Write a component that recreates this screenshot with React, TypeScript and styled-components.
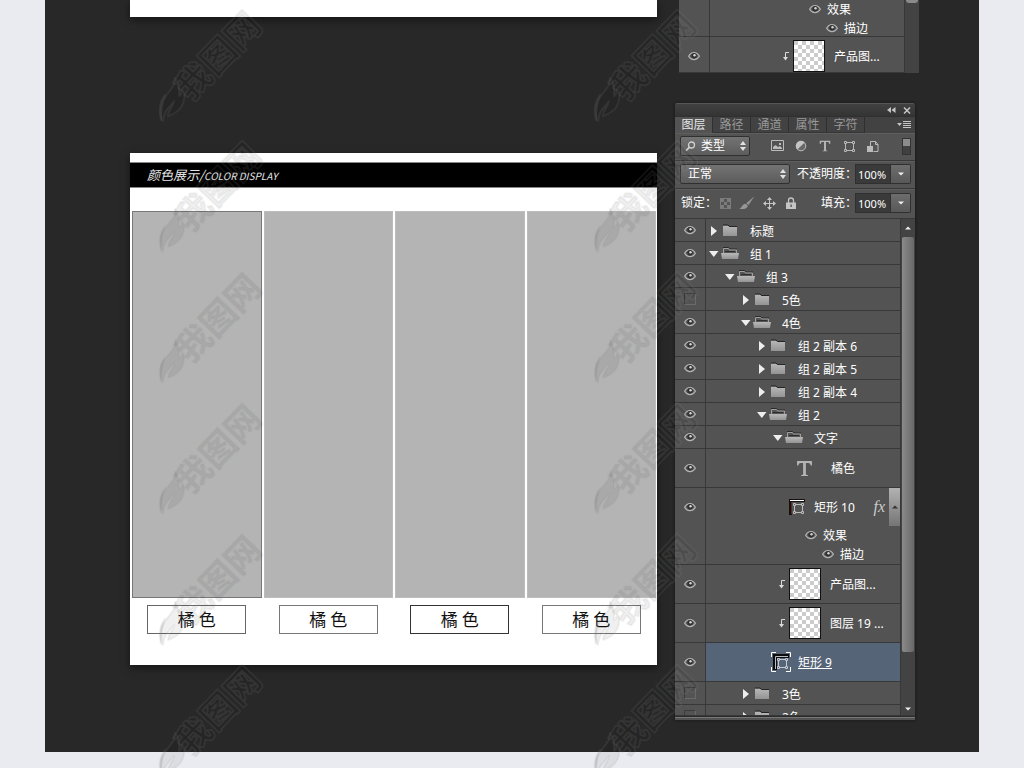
import React from "react";
import styled, { createGlobalStyle } from "styled-components";

const GlobalStyle = createGlobalStyle`
  *, *::before, *::after { box-sizing: border-box; }
  body {
    margin: 0;
    background: #e9ebf0;
    font-family: "Noto Sans", "Noto Sans CJK SC", sans-serif;
    font-size: 12px;
    line-height: 16px;
    color: #fff;
  }
  button, input, select { font: inherit; color: inherit; margin: 0; }
  svg { display: block; }
`;

const Page = styled.div`
  position: relative;
  overflow: hidden;
  padding: 0 45px 16px;
`;

const Stage = styled.main`
  display: grid;
  grid-template-columns: minmax(0, 1fr) 240px;
  gap: 18px;
  padding: 0 64px 32px 85px;
  background: #282828;
`;

/* ---------- artboards ---------- */

const Boards = styled.section`
  display: flex;
  flex-direction: column;
  gap: 136px;
`;

const Board = styled.article`
  background: #fff;
  box-shadow: 0 3px 8px rgba(0, 0, 0, 0.5);
`;

const PreviousBoard = styled(Board)`
  height: 17px;
`;

const ColorBoard = styled(Board)`
  height: 512px;
  padding-top: 9px;
`;

const BoardTitle = styled.h1`
  margin: 0 0 23px;
  height: 26px;
  padding-left: 17px;
  border: solid #888;
  border-width: 1px 0;
  background: #000;
  color: #e8e8e8;
  font-family: "Noto Sans CJK SC", sans-serif;
  font-size: 13px;
  font-style: italic;
  font-weight: 400;
  line-height: 24px;
  small { font-size: 10px; }
`;

const Swatches = styled.div`
  display: grid;
  grid-template-columns: repeat(4, 1fr);
  gap: 2px;
  padding: 0 1px 0 2px;
`;

const SwatchColumn = styled.figure`
  display: flex;
  flex-direction: column;
  align-items: center;
  gap: 7px;
  margin: 0;
`;

const Swatch = styled.div<{ $selected?: boolean }>`
  width: 100%;
  height: 387px;
  background: #b4b4b4;
  border: 1px solid ${(p) => (p.$selected ? "#777" : "#bcbcbc")};
`;

const SwatchLabel = styled.figcaption<{ $tone: string }>`
  width: 99px;
  height: 29px;
  border: 1px solid ${(p) => p.$tone};
  color: #111;
  font-family: "Noto Sans CJK SC", sans-serif;
  font-size: 17px;
  font-weight: 400;
  line-height: 26px;
  text-align: center;
`;

/* ---------- side panels ---------- */

const Side = styled.aside`
  display: flex;
  flex-direction: column;
  gap: 30px;
`;

const UpperPanel = styled.div`
  display: flex;
  height: 73px;
  margin: 0 -4px 0 4px;
  overflow: hidden;
  background: #535353;
`;

const UpperRows = styled.div`
  flex: 1;
  display: flex;
  flex-direction: column;
  justify-content: flex-end;
`;

const Panel = styled.section`
  overflow: hidden;
  border-radius: 3px 3px 0 0;
  background: #535353;
  box-shadow: 0 0 3px #151515;
`;

const PanelHeader = styled.header`
  display: flex;
  justify-content: flex-end;
  align-items: center;
  gap: 7px;
  height: 13px;
  padding: 0 4px;
  border-top: 1px solid #565656;
  background: linear-gradient(#414141, #343434);
`;

const IconButton = styled.button`
  display: flex;
  align-items: center;
  justify-content: center;
  padding: 0;
  border: 0;
  background: none;
  color: #c4c4c4;
`;

const Tabs = styled.nav`
  display: flex;
  height: 17px;
  background: #424242;
  border-top: 1px solid #303030;
`;

const Tab = styled.button<{ $active?: boolean }>`
  width: 38px;
  padding: 0;
  border: 0;
  border-right: 1px solid #303030;
  border-bottom: 1px solid ${(p) => (p.$active ? "#535353" : "#363636")};
  background: ${(p) => (p.$active ? "#535353" : "#424242")};
  color: ${(p) => (p.$active ? "#e6e6e6" : "#989898")};
  line-height: 15px;
`;

const TabMenu = styled(IconButton)`
  margin-left: auto;
  padding-right: 4px;
`;

const ToolRow = styled.div<{ $height: number }>`
  display: flex;
  align-items: center;
  height: ${(p) => p.$height}px;
  padding: 0 4px 1px 5px;
  border-bottom: 1px solid #383838;
  box-shadow: inset 0 1px 0 #5e5e5e;
`;

const SelectBox = styled.div<{ $width: number }>`
  position: relative;
  width: ${(p) => p.$width}px;
  height: 20px;
  svg { position: absolute; top: 5px; pointer-events: none; }
  svg:last-child { right: 4px; }
  svg:first-child { left: 5px; }
`;

const Select = styled.select<{ $inset: number }>`
  appearance: none;
  width: 100%;
  height: 20px;
  padding: 0 0 0 ${(p) => p.$inset}px;
  border: 1px solid #303030;
  border-radius: 2px;
  background: linear-gradient(#737373, #5c5c5c);
  line-height: 16px;
`;

const FilterIcons = styled.div`
  display: flex;
  margin-left: 15px;
  button { width: 24px; height: 20px; }
`;

const FilterSwitch = styled.button`
  width: 9px;
  height: 17px;
  margin: 0 0 0 auto;
  padding: 0;
  border: 1px solid #333;
  background: linear-gradient(#8c8c8c 0 7px, #404040 7px);
`;

const FieldLabel = styled.label<{ $width: number }>`
  width: ${(p) => p.$width}px;
  margin-left: auto;
  white-space: nowrap;
`;

const PercentInput = styled.input`
  width: 36px;
  height: 20px;
  padding: 0 0 0 2px;
  border: 1px solid #303030;
  background: #3a3a3a;
  font-size: 11px;
`;

const DropButton = styled(IconButton)`
  width: 20px;
  height: 20px;
  border: 1px solid #303030;
  border-left: 0;
  border-radius: 0 2px 2px 0;
  background: linear-gradient(#6d6d6d, #585858);
  color: #eee;
`;

const LockIcons = styled.div`
  display: flex;
  button { width: 22px; height: 20px; }
`;

const LockText = styled.span`
  width: 34px;
  padding-left: 1px;
  white-space: nowrap;
`;

/* ---------- layer list ---------- */

const ListArea = styled.div`
  display: flex;
  height: 496px;
`;

const List = styled.ul`
  flex: 1;
  margin: 0;
  padding: 0;
  overflow: hidden;
  list-style: none;
`;

const Row = styled.li<{ $height: number }>`
  display: flex;
  height: ${(p) => p.$height}px;
  border-bottom: 1px solid #383838;
`;

const EyeCell = styled.div<{ $line: number }>`
  display: flex;
  flex: none;
  align-items: center;
  justify-content: center;
  width: 30px;
  height: ${(p) => p.$line}px;
`;

const RowBody = styled.div<{ $active?: boolean }>`
  flex: 1;
  min-width: 0;
  border-left: 1px solid #383838;
  background: ${(p) => (p.$active ? "#566477" : "transparent")};
`;

const RowLine = styled.div<{ $height: number; $indent: number }>`
  display: flex;
  align-items: center;
  height: ${(p) => p.$height}px;
  padding-left: ${(p) => p.$indent}px;
  white-space: nowrap;
`;

const Twisty = styled(IconButton)`
  width: 12px;
  height: 16px;
  margin-right: 1px;
  color: #eee;
`;

const LayerName = styled.span<{ $gap: number; $underline?: boolean }>`
  margin-left: ${(p) => p.$gap}px;
  padding-top: 2px;
  text-decoration: ${(p) => (p.$underline ? "underline" : "none")};
`;

const EmptyEye = styled.input`
  appearance: none;
  width: 12px;
  height: 12px;
  border: 1px solid #3c3c3c;
  border-right-color: #6a6a6a;
  border-bottom-color: #6a6a6a;
`;

const Thumb = styled.span`
  width: 32px;
  height: 32px;
  margin-left: 4px;
  border: 1px solid #111;
  background: repeating-conic-gradient(#fff 0 25%, #ccc 0 50%) 0 0 / 8px 8px;
`;

const FxMark = styled.em`
  margin-left: auto;
  color: #ccc;
  font-family: "Liberation Serif", serif;
  font-size: 16px;
`;

const FxToggle = styled.button`
  display: flex;
  align-items: center;
  justify-content: center;
  width: 11px;
  height: 38px;
  margin-left: 4px;
  padding: 0;
  border: 0;
  background: linear-gradient(#b2b2b2, #757575);
  color: #333;
`;

const Scrollbar = styled.div`
  display: flex;
  flex-direction: column;
  align-items: center;
  width: 15px;
  border-left: 1px solid #383838;
  background: #434343;
  color: #eee;
`;

const ScrollButton = styled(IconButton)<{ $height: number }>`
  width: 14px;
  height: ${(p) => p.$height}px;
  color: #eee;
`;

const ScrollThumb = styled.div`
  flex: 1;
  width: 12px;
  margin-bottom: 51px;
  border-radius: 2px;
  background: linear-gradient(90deg, #8a8a8a, #686868);
`;

const UpperScroll = styled.div`
  width: 15px;
  border-left: 1px solid #383838;
  background: #434343;
  &::before {
    content: "";
    display: block;
    width: 12px;
    height: 3px;
    margin-left: 1px;
    border-radius: 0 0 3px 3px;
    background: #8a8a8a;
  }
`;

const PanelFooter = styled.footer`
  height: 5px;
  border-top: 1px solid #383838;
  background: linear-gradient(#2c2c2c 0 1px, #777 1px 2px, #535353 2px);
`;

const Watermarks = styled.svg`
  position: absolute;
  top: 0;
  left: 0;
  width: 100%;
  height: 100%;
  pointer-events: none;
`;

/* ---------- icons ---------- */

const Eye = () => (
  <svg width="12" height="10" viewBox="0 0 12 10" fill="none">
    <path d="M0.6 5.2C2 2.7 4 1.6 6 1.6s4 1.1 5.4 3.6C10 7.600 8 8.600 6 8.600S2 7.600 0.600 5.200Z" fill="#5a5a5a" stroke="#b4b4b4" strokeWidth="1.200" />
    <circle cx="6" cy="4.800" r="2.700" fill="#303030" />
    <circle cx="6.500" cy="4.300" r="1.200" fill="#d8d8d8" />
  </svg>
);

const Tri = ({ open }: { open?: boolean }) => (
  <svg width="10" height="10" viewBox="0 0 10 10" fill="currentColor">
    {open ? <path d="M0 2h9.500L4.800 8Z" /> : <path d="M2 0v10l6-5Z" />}
  </svg>
);

const SmallTri = ({ up }: { up?: boolean }) => (
  <svg width="6" height="4" viewBox="0 0 6 4" fill="currentColor">
    {up ? <path d="M0 3.500h6L3 .5Z" /> : <path d="M0 .5h6L3 3.500Z" />}
  </svg>
);

const UpDown = () => (
  <svg width="6" height="10" viewBox="0 0 6 10" fill="#e2e2e2">
    <path d="M3 0l3 4H0ZM3 10l3-4H0Z" />
  </svg>
);

const Folder = ({ open }: { open?: boolean }) => (
  <svg width="18" height="13" viewBox="0 0 18 13">
    <defs>
      <linearGradient id="folderShade" x1="0" y1="0" x2="0" y2="1">
        <stop offset="0" stopColor="#b8b8b8" />
        <stop offset="1" stopColor="#949494" />
      </linearGradient>
    </defs>
    {open ? (
      <>
        <path d="M2 .5h5.500l1 1.500H16" fill="none" stroke="#2a2a2a" />
        <path d="M2.500 7V1.500h5l1 1.500h7v4" fill="#555" stroke="#a0a0a0" />
        <path d="M4 4.500h10" stroke="#2e2e2e" />
        <path d="M0 6h18l-1 6H1Z" fill="url(#folderShade)" />
      </>
    ) : (
      <>
        <path d="M2 12V1.500h5l1.500 1.500H16v9Z" fill="url(#folderShade)" />
        <path d="M2 1h5l1.500 1.500H16" fill="none" stroke="#252525" />
      </>
    )}
  </svg>
);

const TypeIcon = ({ size }: { size: number }) => (
  <svg width={size} height={size} viewBox="0 0 16 16" fill="#b4b4b4">
    <path d="M1 1h14v4.200h-1.200c-.3-1.700-.9-2.400-2.500-2.400H9.300v10.400c0 .7.600 1 1.900 1V15H4.800v-.8c1.300 0 1.900-.3 1.900-1V2.800h-2C3.100 2.800 2.500 3.500 2.200 5.200H1Z" />
  </svg>
);

const VectorFrame = () => (
  <svg width="13" height="13" viewBox="0 0 13 13" fill="none" stroke="#b8b8b8">
    <path d="M3 2.500h7M3 10.500h7M2.500 3v7M10.500 3v7" />
    <path d="M1.500 1.500h2v2h-2ZM9.500 1.500h2v2h-2ZM1.500 9.500h2v2h-2ZM9.500 9.500h2v2h-2Z" fill="#555" />
  </svg>
);

const ShapeIcon = () => (
  <svg width="17" height="17" viewBox="0 0 17 17" fill="none">
    <path d="M0 0h16v3H3v13H0Z" fill="#161010" />
    <path d="M1 1.500h14" stroke="#fff" />
    <path d="M2.500 3v12" stroke="#5a2c20" />
    <g stroke="#bbb">
      <path d="M6.500 5.500h6M6.500 13.500h6M5.500 6.500v6M13.500 6.500v6" />
      <path d="M4.500 4.500h2v2h-2ZM12.500 4.500h2v2h-2ZM4.500 12.500h2v2h-2ZM12.500 12.500h2v2h-2Z" fill="#555" />
    </g>
  </svg>
);

const ActiveShapeIcon = () => (
  <svg width="20" height="20" viewBox="0 0 20 20" fill="none">
    <path d="M5 .5H.5V5M15 .5h4.500V5M.5 15v4.500H5M19.500 15v4.500H15" stroke="#fff" />
    <path d="M2 2h16v4H6v12H2Z" fill="#0c0c0c" />
    <path d="M4.500 17V4.500H17" stroke="#b9bdc3" />
    <g stroke="#c3c9d2">
      <path d="M8 7.500h7M8 15.500h7M7.500 8v7M15.500 8v7" />
      <path d="M6.500 6.500h2v2h-2ZM14.500 6.500h2v2h-2ZM6.500 14.500h2v2h-2ZM14.500 14.500h2v2h-2Z" fill="#566477" />
    </g>
  </svg>
);

const ClipArrow = () => (
  <svg width="6" height="9" viewBox="0 0 6 9" fill="none">
    <path d="M6 .5H2.500V6" stroke="#ddd" />
    <path d="M0 5h5L2.500 8.500Z" fill="#ddd" />
  </svg>
);

const Magnifier = () => (
  <svg width="11" height="11" viewBox="0 0 11 11" fill="none" stroke="#d0d0d0">
    <circle cx="6.500" cy="4" r="3" strokeWidth="1.300" />
    <path d="M4.300 6.300L1 9.700" strokeWidth="1.700" />
  </svg>
);

const ImageIcon = () => (
  <svg width="13" height="12" viewBox="0 0 13 12" fill="none">
    <path d="M.5 .5h12v10H.5Z" stroke="#bbb" />
    <path d="M2 9V7l2.500-2L7 7l2-1 2 2v1ZM8 3h2v2H8Z" fill="#bbb" />
  </svg>
);

const AdjustIcon = () => (
  <svg width="12" height="12" viewBox="0 0 12 12">
    <circle cx="6" cy="6" r="4.800" fill="#686868" stroke="#bbb" />
    <path d="M9.600 2.400A5 5 0 0 0 2.400 9.600Z" fill="#c4c4c4" />
  </svg>
);

const SmartIcon = () => (
  <svg width="12" height="13" viewBox="0 0 12 13" fill="none">
    <path d="M3.500 6V1.500h5l2.500 3v7H6.500" stroke="#bbb" />
    <path d="M8.500 1.500v3H11" stroke="#bbb" />
    <path d="M0 6h6v6H0Z" fill="#bbb" />
  </svg>
);

const CheckerIcon = () => (
  <svg width="11" height="11" viewBox="0 0 11 11">
    <path d="M0 0h11v11H0Z" fill="#7c7c7c" />
    <path d="M4 1h3v3H4ZM1 4h3v3H1ZM7 4h3v3H7ZM4 7h3v3H4Z" fill="#555" />
  </svg>
);

const BrushIcon = () => (
  <svg width="16" height="14" viewBox="0 0 16 14" fill="#969696">
    <path d="M15.500 .3L9.500 9 7.300 7.200Z" />
    <path d="M6.700 7.800l2.200 1.900c-.6 2.800-3.900 4-8.900 3.100 3-.6 3-4.700 6.700-5Z" />
  </svg>
);

const MoveIcon = () => (
  <svg width="13" height="13" viewBox="0 0 13 13" fill="#c4c4c4">
    <path d="M6 2h1v4h4v1H7v4H6V7H2V6h4Z" />
    <path d="M6.500 0L9 3H4ZM6.500 13L9 10H4ZM0 6.500L3 4v5ZM13 6.500L10 4v5Z" />
  </svg>
);

const LockIcon = () => (
  <svg width="10" height="12" viewBox="0 0 10 12" fill="none">
    <path d="M2.500 6V3.500a2.500 2.500 0 0 1 5 0V6" stroke="#c4c4c4" strokeWidth="1.300" />
    <path d="M0 5.500h10V12H0Z" fill="#c4c4c4" />
    <path d="M4.500 7.500h1.200V10H4.500Z" fill="#444" />
  </svg>
);

/* ---------- layers ---------- */

const VisibleToggle = () => (
  <IconButton aria-label="可见性">
    <Eye />
  </IconButton>
);

type GroupProps = { name: string; level: number; open?: boolean; hidden?: boolean };

const GroupRow = ({ name, level, open, hidden }: GroupProps) => (
  <Row $height={23}>
    <EyeCell $line={22}>
      {hidden ? <EmptyEye type="checkbox" aria-label={name} /> : <VisibleToggle />}
    </EyeCell>
    <RowBody>
      <RowLine $height={23} $indent={2 + level * 16}>
        <Twisty aria-label={name}>
          <Tri open={open} />
        </Twisty>
        <Folder open={open} />
        <LayerName $gap={11}>{name}</LayerName>
      </RowLine>
    </RowBody>
  </Row>
);

type LayerProps = {
  name: string;
  indent: number;
  gap: number;
  icon: React.ReactNode;
  active?: boolean;
  fx?: boolean;
};

const Effects = () => (
  <>
    <RowLine $height={18} $indent={99}>
      <VisibleToggle />
      <LayerName $gap={6}>效果</LayerName>
    </RowLine>
    <RowLine $height={19} $indent={116}>
      <VisibleToggle />
      <LayerName $gap={6}>描边</LayerName>
    </RowLine>
  </>
);

const LayerRow = ({ name, indent, gap, icon, active, fx }: LayerProps) => (
  <Row $height={fx ? 77 : 39}>
    <EyeCell $line={38}>
      <VisibleToggle />
    </EyeCell>
    <RowBody $active={active}>
      <RowLine $height={38} $indent={indent}>
        {icon}
        <LayerName $gap={gap} $underline={active}>
          {name}
        </LayerName>
        {fx && (
          <>
            <FxMark>fx</FxMark>
            <FxToggle aria-label="折叠效果">
              <SmallTri up />
            </FxToggle>
          </>
        )}
      </RowLine>
      {fx && <Effects />}
    </RowBody>
  </Row>
);

const ClippedThumb = () => (
  <>
    <ClipArrow />
    <Thumb />
  </>
);

const columns = [210, 645];
const rows = [0, 1, 2, 3, 4, 5];

const Watermark = ({ x, y }: { x: number; y: number }) => (
  <g
    transform={`translate(${x} ${y})`}
    fill="rgba(0,0,0,0.06)"
    stroke="rgba(150,150,150,0.12)"
    strokeWidth="2"
    strokeLinejoin="round"
    paintOrder="stroke"
  >
    <text
      transform="rotate(-46)"
      x="-41"
      y="13"
      fontSize="35"
      fontWeight="700"
      fontFamily='"Noto Sans CJK SC", sans-serif'
    >
      我图网
    </text>
    <path d="M-35 14c2 10-12 16-14 28-1 7 0 12 2 15 1-11 6-13 11-20-1 6-6 9-6 15 9-3 15-9 16-17 1-4 0-7-2-9 0 3-1 5-3 6 1-8-1-14-4-18Z" />
    <path d="M-45 31c-5 6-7 13-4 25 0-10 1-17 4-25Z" />
  </g>
);

export default function App() {
  return (
    <>
      <GlobalStyle />
      <Page>
        <Stage>
          <Boards>
            <PreviousBoard />
            <ColorBoard>
              <BoardTitle>
                颜色展示/<small>COLOR DISPLAY</small>
              </BoardTitle>
              <Swatches>
                {["#666", "#777", "#333", "#777"].map((tone, i) => (
                  <SwatchColumn key={i}>
                    <Swatch $selected={i === 0} />
                    <SwatchLabel $tone={tone}>橘 色</SwatchLabel>
                  </SwatchColumn>
                ))}
              </Swatches>
            </ColorBoard>
          </Boards>

          <Side>
            <UpperPanel>
              <UpperRows>
                <Row as="div" $height={37}>
                  <EyeCell $line={36} />
                  <RowBody>
                    <Effects />
                  </RowBody>
                </Row>
                <Row as="div" $height={36}>
                  <EyeCell $line={38}>
                    <VisibleToggle />
                  </EyeCell>
                  <RowBody>
                    <RowLine $height={38} $indent={73}>
                      <ClippedThumb />
                      <LayerName $gap={9}>产品图...</LayerName>
                    </RowLine>
                  </RowBody>
                </Row>
              </UpperRows>
              <UpperScroll />
            </UpperPanel>

            <Panel>
              <PanelHeader>
                <IconButton aria-label="折叠">
                  <svg width="9" height="6" viewBox="0 0 9 6" fill="currentColor">
                    <path d="M4 0v6L0 3ZM8.500 0v6l-4-3Z" />
                  </svg>
                </IconButton>
                <IconButton aria-label="关闭">
                  <svg width="8" height="7" viewBox="0 0 8 7" fill="none" stroke="currentColor" strokeWidth="1.500">
                    <path d="M1 .5l6 6M7 .5l-6 6" />
                  </svg>
                </IconButton>
              </PanelHeader>
              <Tabs>
                {["图层", "路径", "通道", "属性", "字符"].map((t, i) => (
                  <Tab key={t} $active={i === 0}>
                    {t}
                  </Tab>
                ))}
                <TabMenu aria-label="面板菜单">
                  <svg width="14" height="8" viewBox="0 0 14 8" fill="currentColor">
                    <path d="M0 2h5L2.500 5ZM6 0h8v1H6ZM6 2h8v1H6ZM6 4h8v1H6ZM6 6h8v1H6Z" />
                  </svg>
                </TabMenu>
              </Tabs>

              <ToolRow $height={28}>
                <SelectBox $width={70}>
                  <Magnifier />
                  <Select $inset={20} aria-label="滤镜类型">
                    <option>类型</option>
                  </Select>
                  <UpDown />
                </SelectBox>
                <FilterIcons>
                  <IconButton aria-label="像素"><ImageIcon /></IconButton>
                  <IconButton aria-label="调整"><AdjustIcon /></IconButton>
                  <IconButton aria-label="文字"><TypeIcon size={12} /></IconButton>
                  <IconButton aria-label="形状"><VectorFrame /></IconButton>
                  <IconButton aria-label="智能对象"><SmartIcon /></IconButton>
                </FilterIcons>
                <FilterSwitch aria-label="滤镜开关" />
              </ToolRow>

              <ToolRow $height={28}>
                <SelectBox $width={110}>
                  <Select $inset={7} aria-label="混合模式">
                    <option>正常</option>
                  </Select>
                  <UpDown />
                </SelectBox>
                <FieldLabel htmlFor="opacity" $width={58}>不透明度：</FieldLabel>
                <PercentInput id="opacity" defaultValue="100%" />
                <DropButton aria-label="不透明度选项"><SmallTri /></DropButton>
              </ToolRow>

              <ToolRow $height={30}>
                <LockText>锁定：</LockText>
                <LockIcons>
                  <IconButton aria-label="锁定透明像素"><CheckerIcon /></IconButton>
                  <IconButton aria-label="锁定图像像素"><BrushIcon /></IconButton>
                  <IconButton aria-label="锁定位置"><MoveIcon /></IconButton>
                  <IconButton aria-label="锁定全部"><LockIcon /></IconButton>
                </LockIcons>
                <FieldLabel htmlFor="fill" $width={34}>填充：</FieldLabel>
                <PercentInput id="fill" defaultValue="100%" />
                <DropButton aria-label="填充选项"><SmallTri /></DropButton>
              </ToolRow>

              <ListArea>
                <List>
                  <GroupRow name="标题" level={0} />
                  <GroupRow name="组 1" level={0} open />
                  <GroupRow name="组 3" level={1} open />
                  <GroupRow name="5色" level={2} hidden />
                  <GroupRow name="4色" level={2} open />
                  <GroupRow name="组 2 副本 6" level={3} />
                  <GroupRow name="组 2 副本 5" level={3} />
                  <GroupRow name="组 2 副本 4" level={3} />
                  <GroupRow name="组 2" level={3} open />
                  <GroupRow name="文字" level={4} open />
                  <LayerRow name="橘色" indent={90} gap={18} icon={<TypeIcon size={17} />} />
                  <LayerRow name="矩形 10" indent={83} gap={8} icon={<ShapeIcon />} fx />
                  <LayerRow name="产品图..." indent={73} gap={9} icon={<ClippedThumb />} />
                  <LayerRow name="图层 19 ..." indent={73} gap={9} icon={<ClippedThumb />} />
                  <LayerRow name="矩形 9" indent={65} gap={7} icon={<ActiveShapeIcon />} active />
                  <GroupRow name="3色" level={2} hidden />
                  <GroupRow name="2色" level={2} hidden />
                </List>
                <Scrollbar>
                  <ScrollButton $height={18} aria-label="向上滚动"><SmallTri up /></ScrollButton>
                  <ScrollThumb />
                  <ScrollButton $height={12} aria-label="向下滚动"><SmallTri /></ScrollButton>
                </Scrollbar>
              </ListArea>
              <PanelFooter />
            </Panel>
          </Side>
        </Stage>

        <Watermarks aria-hidden="true">
          {columns.map((x) => rows.map((r) => <Watermark key={`${x}-${r}`} x={x} y={64 + r * 131} />))}
        </Watermarks>
      </Page>
    </>
  );
}
